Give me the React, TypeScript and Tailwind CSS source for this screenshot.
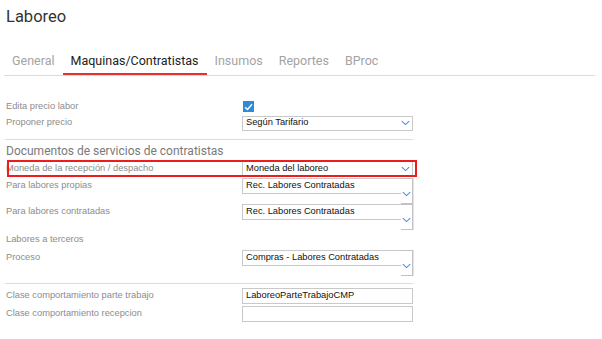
import React from 'react';

const roboto = "font-['Roboto',Arial,sans-serif]";

function Chevron() {
  return (
    <svg width="9" height="6" viewBox="0 0 9 6" className="block">
      <path d="M0.8 1.2 L4.5 4.6 L8.2 1.2" fill="none" stroke="#4a90d9" strokeWidth="1.1" />
    </svg>
  );
}

function Select({ value }: { value: string }) {
  return (
    <div className="flex h-[15px] w-[171px] items-center justify-between border border-[#c9c9c9] bg-white pl-[3px] pr-[2px] text-[9.3px] text-[#111]">
      <span>{value}</span>
      <Chevron />
    </div>
  );
}

function ListSelect({ value }: { value: string }) {
  return (
    <div className="flex w-[171px]">
      <div className="flex h-[16px] w-[159px] items-center border-y border-l border-[#c9c9c9] pl-[3px] text-[9.3px] text-[#111]">
        {value}
      </div>
      <div className="flex h-[26px] w-[12px] items-center justify-center border-y border-r border-[#c2c2c2] pt-[6px] shadow-[1px_0_0_#e4e4e4]">
        <Chevron />
      </div>
    </div>
  );
}

function Label({ children }: { children: React.ReactNode }) {
  return <div className="w-[236px] shrink-0 text-[9.3px] text-[#8c8c8c]">{children}</div>;
}

type TabProps = { label: string; active?: boolean };

function Tab({ label, active }: TabProps) {
  return (
    <div
      className={`px-[8px] pb-[4px] text-[12.5px] leading-[16px] border-b-2 ${
        active ? 'border-[#e5322d] text-[#222]' : 'border-transparent text-[#a3a3a3]'
      }`}
    >
      {label}
    </div>
  );
}

export default function App() {
  const tabs: TabProps[] = [
    { label: 'General' },
    { label: 'Maquinas/Contratistas', active: true },
    { label: 'Insumos' },
    { label: 'Reportes' },
    { label: 'BProc' },
  ];

  return (
    <div className="h-[339px] w-[602px] overflow-hidden bg-white font-['Liberation_Sans',Arial,sans-serif]">
      <h1 className={`${roboto} pl-[6px] pt-[7px] text-[16.5px] leading-[20px] text-[#333]`}>Laboreo</h1>

      <div className={`${roboto} ml-[4px] mt-[26px] flex w-[591px] border-b border-[#dcdcdc]`}>
        {tabs.map((t) => (
          <Tab key={t.label} {...t} />
        ))}
      </div>

      <div className="pl-[6px] pt-[22px]">
        <div className="flex h-[17px] items-center">
          <Label>Edita precio labor</Label>
          <div className="ml-[1px] flex h-[11px] w-[11px] items-center justify-center bg-[#2f8ad6]">
            <svg width="9" height="8" viewBox="0 0 9 8">
              <path d="M1 4.2 L3.5 6.5 L8 1.3" fill="none" stroke="#fff" strokeWidth="1.4" />
            </svg>
          </div>
        </div>
        <div className="flex h-[16px] items-center">
          <Label>Proponer precio</Label>
          <Select value="Según Tarifario" />
        </div>

        <div className="ml-[-1px] mt-[8px] h-px w-[408px] bg-[#dcdcdc]" />

        <div className={`${roboto} mt-[3px] text-[12px] leading-[16px] text-[#7a7a7a]`}>
          Documentos de servicios de contratistas
        </div>

        <div className="relative mt-[1px] flex h-[17px] items-center">
          <Label>Moneda de la recepción / despacho</Label>
          <Select value="Moneda del laboreo" />
          <div className="pointer-events-none absolute left-[1px] top-0 h-[17px] w-[410px] border-2 border-[#ee1c1c]" />
        </div>

        <div className="mt-[1px] flex h-[26px] items-start">
          <div className="flex h-[15px] items-center">
            <Label>Para labores propias</Label>
          </div>
          <ListSelect value="Rec. Labores Contratadas" />
        </div>
        <div className="flex h-[26px] items-start">
          <div className="flex h-[16px] items-center">
            <Label>Para labores contratadas</Label>
          </div>
          <ListSelect value="Rec. Labores Contratadas" />
        </div>
        <div className="flex h-[20px] items-center">
          <Label>Labores a terceros</Label>
        </div>
        <div className="flex h-[26px] items-start">
          <div className="flex h-[15px] items-center">
            <Label>Proceso</Label>
          </div>
          <ListSelect value="Compras - Labores Contratadas" />
        </div>

        <div className="ml-[-1px] mt-[7px] h-px w-[408px] bg-[#dcdcdc]" />

        <div className="mt-[4px] flex flex-col gap-[2px]">
          <div className="flex h-[16px] items-center">
            <Label>Clase comportamiento parte trabajo</Label>
            <div className="flex h-[16px] w-[171px] items-center border border-[#c9c9c9] pl-[3px] text-[9.3px] text-[#111]">
              LaboreoParteTrabajoCMP
            </div>
          </div>
          <div className="flex h-[16px] items-center">
            <Label>Clase comportamiento recepcion</Label>
            <div className="h-[16px] w-[171px] border border-[#c9c9c9]" />
          </div>
        </div>
      </div>
    </div>
  );
}
